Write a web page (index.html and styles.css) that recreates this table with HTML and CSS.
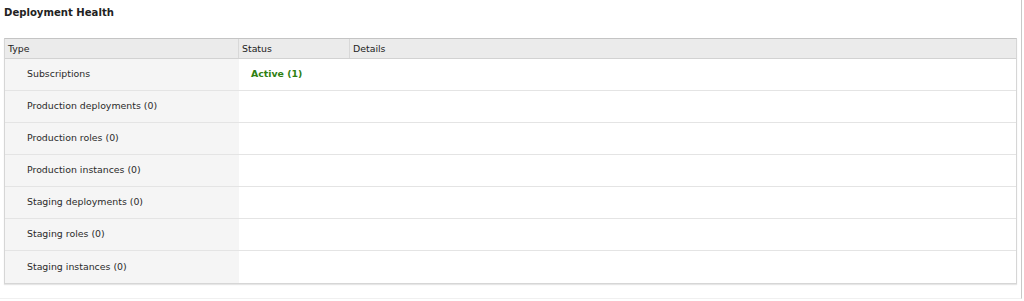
FILE: index.html
```html
<!DOCTYPE html>
<html>
<head>
<meta charset="utf-8">
<link rel="stylesheet" href="styles.css">
</head>
<body>
<div class="page">
  <h2 class="title">Deployment Health</h2>
  <div class="grid">
    <div class="row head">
      <div class="c type">Type</div>
      <div class="c status">Status</div>
      <div class="c details">Details</div>
    </div>
    <div class="row">
      <div class="c type">Subscriptions</div>
      <div class="c status ok">Active (1)</div>
      <div class="c details"></div>
    </div>
    <div class="row">
      <div class="c type">Production deployments (0)</div>
      <div class="c status"></div>
      <div class="c details"></div>
    </div>
    <div class="row">
      <div class="c type">Production roles (0)</div>
      <div class="c status"></div>
      <div class="c details"></div>
    </div>
    <div class="row">
      <div class="c type">Production instances (0)</div>
      <div class="c status"></div>
      <div class="c details"></div>
    </div>
    <div class="row">
      <div class="c type">Staging deployments (0)</div>
      <div class="c status"></div>
      <div class="c details"></div>
    </div>
    <div class="row">
      <div class="c type">Staging roles (0)</div>
      <div class="c status"></div>
      <div class="c details"></div>
    </div>
    <div class="row last">
      <div class="c type">Staging instances (0)</div>
      <div class="c status"></div>
      <div class="c details"></div>
    </div>
  </div>
</div>
</body>
</html>
```
FILE: styles.css
```css
html, body {
  margin: 0;
  padding: 0;
  background: #fff;
}
body {
  font-family: "DejaVu Sans", Verdana, sans-serif;
  font-size: 9.4px;
  color: #2a2a2a;
}
.page {
  width: 1022px;
  height: 299px;
  border-right: 1px solid #c8c8c8;
  border-bottom: 1px solid #f0f0f0;
  padding: 7px 0 0 4px;
  box-sizing: border-box;
}
.title {
  margin: 0 0 19px 0;
  font-size: 10.1px;
  font-weight: bold;
  line-height: 12px;
  color: #222;
}
.grid {
  width: 1011px;
  border: 1px solid #d6d6d6;
  border-top: 1px solid #c4c4c4;
  box-shadow: 0 1px 1px #e6e6e6;
}
.row {
  display: flex;
  height: 31px;
  border-bottom: 1px solid #e4e4e4;
}
.row.last {
  border-bottom: none;
  height: 32px;
}
.row.head {
  height: 19px;
  background: #ebebeb;
  border-bottom: 1px solid #d2d2d2;
}
.c {
  display: flex;
  align-items: center;
  box-sizing: border-box;
  padding-bottom: 2px;
}
.type {
  width: 234px;
  padding-left: 22px;
  background: #f5f5f5;
}
.status {
  width: 111px;
  padding-left: 12px;
}
.details {
  flex: 1;
  padding-left: 4px;
}
.head .c {
  background: #ebebeb;
  padding-left: 3px;
  padding-bottom: 0;
  border-right: 1px solid #d8d8d8;
  color: #222;
}
.head .status { padding-left: 3px; }
.head .details { border-right: none; }
.ok {
  color: #2f7f12;
  font-weight: bold;
}
```
